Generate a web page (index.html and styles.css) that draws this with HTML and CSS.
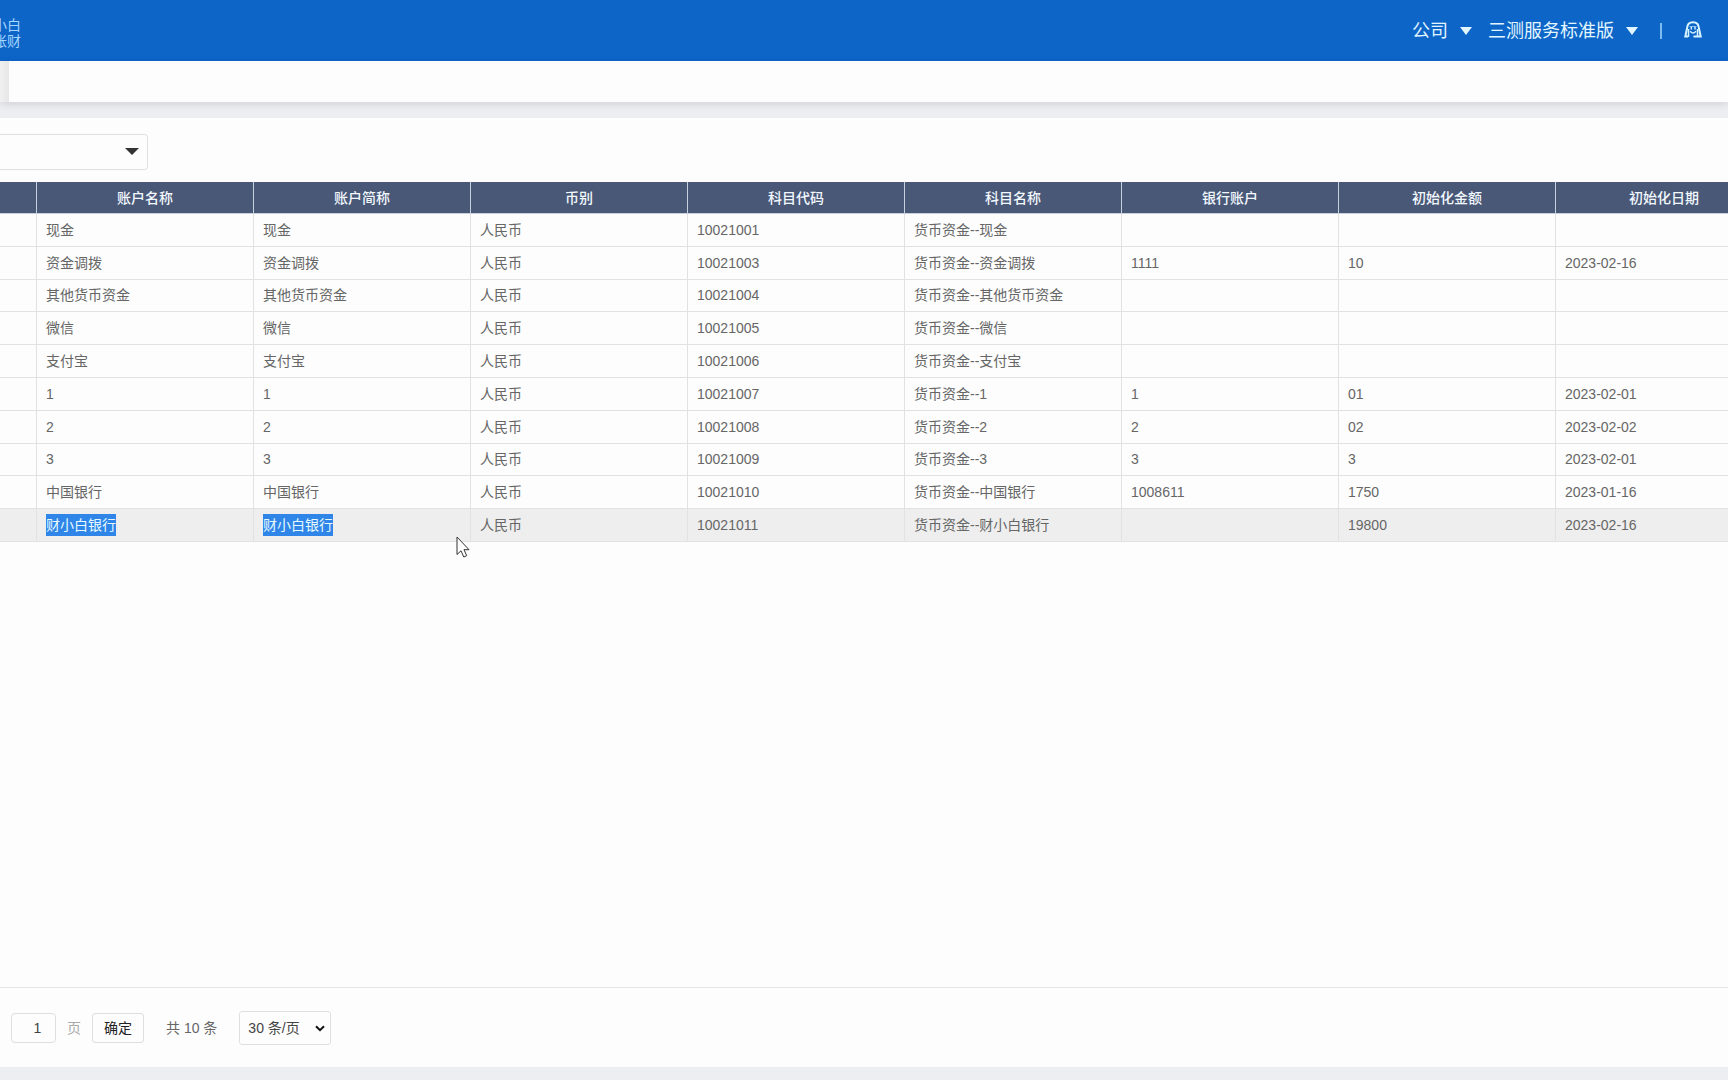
FILE: index.html
```html
<!DOCTYPE html>
<html lang="zh-CN">
<head>
<meta charset="utf-8">
<title>资金账户</title>
<link rel="stylesheet" href="styles.css">
</head>
<body>
<header class="topbar">
  <div class="brand"><span>小白</span><span>账财</span></div>
  <nav class="account">
    <button class="account-menu" type="button">公司
      <svg class="caret" viewBox="0 0 12 8"><path d="M0 0h12L6 8z"/></svg>
    </button>
    <button class="account-menu" type="button">三测服务标准版
      <svg class="caret" viewBox="0 0 12 8"><path d="M0 0h12L6 8z"/></svg>
    </button>
    <span class="divider"></span>
    <button class="service" type="button" aria-label="客服">
      <svg viewBox="0 0 18 17"><path d="M4 15.500H1.300L3 7.500C3.200 3.600 5.600 1.200 9 1.200s5.800 2.400 6 6.300l1.700 8H9.500" fill="none" stroke="#d8f4ff" stroke-width="2"/><path d="M4.500 8v8M13.500 8v7" fill="none" stroke="#d8f4ff" stroke-width="1.500"/><path d="M5.500 5.500h7" fill="none" stroke="#8cc4f2"/><path d="M7.300 6v2.500M11 6v2.500M6.300 10c1 2.600 4.600 2.600 5.600 0" fill="none" stroke="#d8f4ff" stroke-width="1.400"/></svg>
    </button>
  </nav>
</header>
<div class="tabs"><div class="tab-edge"></div></div>
<main class="panel">
  <div class="filter">
    <div class="picker">
      <select aria-label="筛选"><option></option></select>
      <svg class="picker-caret" viewBox="0 0 14 7"><path d="M0 0h14L7 7z"/></svg>
    </div>
  </div>
  <div class="grid">
    <table>
      <colgroup><col class="col-lead"><col span="8" class="col-data"></colgroup>
      <thead>
        <tr><th></th><th>账户名称</th><th>账户简称</th><th>币别</th><th>科目代码</th><th>科目名称</th><th>银行账户</th><th>初始化金额</th><th>初始化日期</th></tr>
      </thead>
      <tbody>
        <tr><td></td><td>现金</td><td>现金</td><td>人民币</td><td>10021001</td><td>货币资金--现金</td><td></td><td></td><td></td></tr>
        <tr><td></td><td>资金调拨</td><td>资金调拨</td><td>人民币</td><td>10021003</td><td>货币资金--资金调拨</td><td>1111</td><td>10</td><td>2023-02-16</td></tr>
        <tr><td></td><td>其他货币资金</td><td>其他货币资金</td><td>人民币</td><td>10021004</td><td>货币资金--其他货币资金</td><td></td><td></td><td></td></tr>
        <tr><td></td><td>微信</td><td>微信</td><td>人民币</td><td>10021005</td><td>货币资金--微信</td><td></td><td></td><td></td></tr>
        <tr><td></td><td>支付宝</td><td>支付宝</td><td>人民币</td><td>10021006</td><td>货币资金--支付宝</td><td></td><td></td><td></td></tr>
        <tr><td></td><td>1</td><td>1</td><td>人民币</td><td>10021007</td><td>货币资金--1</td><td>1</td><td>01</td><td>2023-02-01</td></tr>
        <tr><td></td><td>2</td><td>2</td><td>人民币</td><td>10021008</td><td>货币资金--2</td><td>2</td><td>02</td><td>2023-02-02</td></tr>
        <tr><td></td><td>3</td><td>3</td><td>人民币</td><td>10021009</td><td>货币资金--3</td><td>3</td><td>3</td><td>2023-02-01</td></tr>
        <tr><td></td><td>中国银行</td><td>中国银行</td><td>人民币</td><td>10021010</td><td>货币资金--中国银行</td><td>1008611</td><td>1750</td><td>2023-01-16</td></tr>
        <tr class="current"><td></td><td><mark>财小白银行</mark></td><td><mark>财小白银行</mark></td><td>人民币</td><td>10021011</td><td>货币资金--财小白银行</td><td></td><td>19800</td><td>2023-02-16</td></tr>
      </tbody>
    </table>
  </div>
  <footer class="pager">
    <input class="page-no" id="page-no" type="text" value="1">
    <label class="page-label" for="page-no">页</label>
    <button class="go" type="button">确定</button>
    <span class="total">共 10 条</span>
    <div class="page-size">
      <select aria-label="每页条数"><option>30 条/页</option></select>
      <svg class="chevron" viewBox="0 0 10 7"><path d="M1 1.200l4 4 4-4"/></svg>
    </div>
  </footer>
</main>
<svg class="cursor" viewBox="0 0 14 22"><path d="M1 1v17.500l4-3.700 2.800 6.200 2.900-1.300-2.700-6h5z"/></svg>
</body>
</html>
```
FILE: styles.css
```css
* {
  box-sizing: border-box;
}

body {
  margin: 0;
  min-height: 100vh;
  display: flex;
  flex-direction: column;
  background: #eceef1;
  color: #666;
  font: 14px/22px "Liberation Sans", "Noto Sans CJK SC", sans-serif;
}

button,
input,
select {
  margin: 0;
  font: inherit;
  color: inherit;
}

.topbar {
  height: 61px;
  display: flex;
  align-items: center;
  justify-content: space-between;
  background: #0c65c7;
  color: #e2f6ff;
}

.brand {
  width: 21px;
  display: flex;
  flex-direction: column;
  align-items: flex-end;
  overflow: hidden;
  padding-top: 4px;
  color: #a5d6ff;
  line-height: 16px;
  white-space: nowrap;
}

.account {
  display: flex;
  align-items: center;
  padding-right: 26px;
}

.account-menu {
  display: flex;
  align-items: center;
  gap: 12px;
  padding: 0;
  margin-right: 16px;
  border: 0;
  background: none;
  font-size: 18px;
  line-height: 26px;
}

.caret {
  width: 12px;
  height: 8px;
  fill: #e2f6ff;
}

.divider {
  width: 2px;
  height: 16px;
  margin: 0 22px 0 6px;
  background: #7dbcf0;
}

.service {
  display: flex;
  padding: 0 0 2px;
  border: 0;
  background: none;
}

.service svg {
  width: 18px;
  height: 17px;
}

.tabs {
  height: 41px;
  display: flex;
  background: #fdfdfd;
  box-shadow: 0 2px 8px rgba(0, 0, 0, 0.12);
}

.tab-edge {
  width: 9px;
  background: linear-gradient(to right, #f0f0f0, #e6e6e7);
}

.panel {
  flex: 1;
  display: flex;
  flex-direction: column;
  margin: 16px 0 13px;
  background: #fdfdfd;
  position: relative;
}

.filter {
  padding: 16px 0 12px;
}

.picker,
.page-size {
  position: relative;
}

.picker {
  width: 148px;
}

.picker select,
.page-size select {
  display: block;
  width: 100%;
  appearance: none;
  border: 1px solid #e0e0e2;
  border-radius: 3px;
  background: #fdfdfd;
}

.picker select {
  height: 36px;
  border-left: 0;
  border-radius: 0 4px 4px 0;
}

.picker-caret {
  position: absolute;
  top: 14px;
  right: 9px;
  width: 14px;
  height: 7px;
  fill: #333;
}

.grid {
  flex: 1;
  overflow: hidden;
}

table {
  width: 1773px;
  height: 360px;
  table-layout: fixed;
  border-collapse: separate;
  border-spacing: 0;
}

.col-lead {
  width: 37px;
}

.col-data {
  width: 217px;
}

th,
td {
  padding: 0 9px;
  border-right: 1px solid #e2e2e3;
  border-bottom: 1px solid #e2e2e3;
  text-align: left;
}

th {
  height: 32px;
  background: #4a5877;
  border-color: #c8d0de;
  color: #f2f8ff;
  font-weight: 500;
  text-align: center;
}

td {
  height: 32px;
}

.current td {
  background: #eee;
}

mark {
  display: inline-block;
  background: #2f86e8;
  color: #e6faff;
}

.pager {
  height: 80px;
  display: flex;
  align-items: center;
  padding-left: 11px;
  border-top: 1px solid #e6e6e8;
}

.page-no,
.go {
  height: 30px;
  border: 1px solid #dedee0;
  border-radius: 4px;
  background: #fdfdfd;
}

.page-no {
  width: 45px;
  padding: 0 0 0 8px;
  color: #444;
  text-align: center;
}

.page-label {
  margin: 0 11px;
  color: #aaa;
}

.go {
  width: 52px;
  padding: 0;
  border-radius: 3px;
  color: #222;
}

.total {
  margin: 0 22px;
}

.page-size {
  width: 92px;
}

.page-size select {
  height: 34px;
  padding: 0 8px;
  color: #444;
}

.chevron {
  position: absolute;
  top: 14px;
  right: 6px;
  width: 10px;
  height: 7px;
  fill: none;
  stroke: #111;
  stroke-width: 2;
}

.cursor {
  position: absolute;
  left: 456px;
  top: 536px;
  width: 14px;
  height: 22px;
  fill: #fff;
  stroke: #333;
}
```
